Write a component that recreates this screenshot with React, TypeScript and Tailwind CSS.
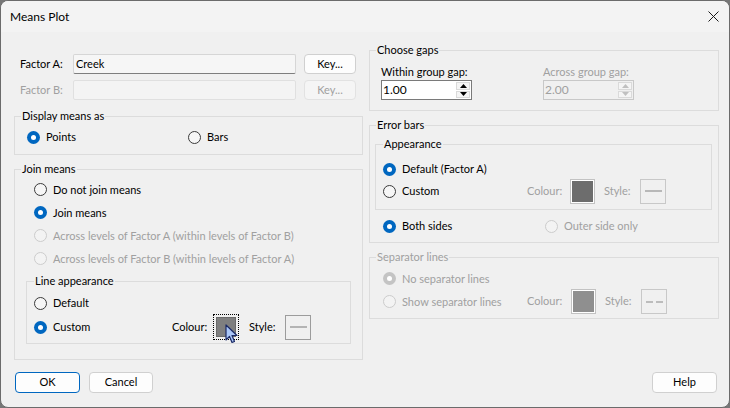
import React from 'react';

type RadioProps = {
  label: string;
  checked?: boolean;
  disabled?: boolean;
  className?: string;
};

const Radio = ({ label, checked, disabled, className = '' }: RadioProps) => {
  return (
    <div className={`flex items-center gap-[6px] ${className}`}>
      {checked ? (
        <span
          className={`flex h-[13px] w-[13px] shrink-0 items-center justify-center rounded-full ${
            disabled ? 'bg-[#c4c4c4]' : 'bg-[#0067c0]'
          }`}
        >
          <span className="h-[5px] w-[5px] rounded-full bg-white"></span>
        </span>
      ) : (
        <span
          className={`h-[13px] w-[13px] shrink-0 rounded-full border ${
            disabled ? 'border-[#cccccc] bg-[#f3f3f3]' : 'border-[#3a3a3a] bg-[#f6f6f6]'
          }`}
        ></span>
      )}
      <span className={`whitespace-nowrap leading-[16px] ${disabled ? 'text-[#a0a0a0]' : ''}`}>{label}</span>
    </div>
  );
};

type GroupProps = {
  title: string;
  disabled?: boolean;
  nested?: boolean;
  className?: string;
  children: React.ReactNode;
};

const Group = ({ title, disabled, nested, className = '', children }: GroupProps) => {
  return (
    <fieldset className={`border border-[#dcdcdc] ${className}`}>
      <legend
        className={`${nested ? 'ml-[7px]' : 'ml-[6px]'} px-[1px] leading-[14px] ${
          disabled ? 'text-[#a0a0a0]' : ''
        }`}
      >
        {title}
      </legend>
      {children}
    </fieldset>
  );
};

const Swatch = ({ fill, focused }: { fill: string; focused?: boolean }) => {
  if (focused) {
    return (
      <div className="h-[26px] w-[26px] border border-dotted border-black p-[2px]">
        <div className="h-full w-full border border-[#6a6a6a]" style={{ backgroundColor: fill }}></div>
      </div>
    );
  }
  return (
    <div className="h-[25px] w-[25px] border border-[#c2c2c2] bg-white p-[1px]">
      <div className="h-full w-full" style={{ backgroundColor: fill }}></div>
    </div>
  );
};

const StyleBox = ({ dashed, light }: { dashed?: boolean; light?: boolean }) => {
  return (
    <div
      className={`flex h-[25px] w-[26px] items-center justify-center border ${
        light ? 'border-[#c8c8c8]' : 'border-[#9c9c9c]'
      } bg-[#f0f0f0]`}
    >
      {dashed ? (
        <div className="flex gap-[3px]">
          <span className="h-[2px] w-[7px] bg-[#bcbcbc]"></span>
          <span className="h-[2px] w-[7px] bg-[#bcbcbc]"></span>
        </div>
      ) : (
        <span className={`h-[2px] w-[17px] ${light ? 'bg-[#b8b8b8]' : 'bg-[#b4b4b4]'}`}></span>
      )}
    </div>
  );
};

const SpinBox = ({ value, disabled }: { value: string; disabled?: boolean }) => {
  const arrow = disabled ? 'text-[#c0c0c0]' : 'text-black';
  return (
    <div
      className={`flex h-[20px] w-[91px] border ${
        disabled ? 'border-[#c8c8c8] bg-[#f0f0f0] text-[#a0a0a0]' : 'border-[#7a7a7a] bg-white'
      }`}
    >
      <span className="flex-1 pl-[1px] text-[12px] leading-[18px]">{value}</span>
      <div className="flex w-[16px] flex-col gap-[1px] p-[1px]">
        <div className={`flex flex-1 items-center justify-center border border-[#dadada] bg-[#f5f5f5] ${arrow}`}>
          <svg width="7" height="4" viewBox="0 0 7 4">
            <path d="M0 4 L3.5 0 L7 4 Z" fill="currentColor" />
          </svg>
        </div>
        <div className={`flex flex-1 items-center justify-center border border-[#dadada] bg-[#f5f5f5] ${arrow}`}>
          <svg width="7" height="4" viewBox="0 0 7 4">
            <path d="M0 0 L7 0 L3.5 4 Z" fill="currentColor" />
          </svg>
        </div>
      </div>
    </div>
  );
};

const Button = ({ label, primary, disabled, className = '' }: { label: string; primary?: boolean; disabled?: boolean; className?: string }) => {
  return (
    <div
      className={`flex h-[20px] items-center justify-center rounded-[4px] border ${
        primary ? 'border-[#0067c0]' : disabled ? 'border-[#e2e2e2]' : 'border-[#d0d0d0]'
      } ${disabled ? 'bg-[#f5f5f5] text-[#a0a0a0]' : 'bg-[#fdfdfd]'} ${className}`}
    >
      {label}
    </div>
  );
};

const Cursor = () => (
  <svg className="absolute left-[12px] top-[10px]" width="13" height="20" viewBox="0 0 13 20">
    <path
      d="M1 1 L1 16 L4.5 12.5 L7 18.5 L9.5 17.5 L7 11.5 L12 11.5 Z"
      fill="#aac6f7"
      stroke="#1b2a66"
      strokeWidth="1.2"
      strokeLinejoin="round"
    />
  </svg>
);

export default function App() {
  return (
    <div className="h-[408px] w-[730px] bg-[#767676]">
      <div className="flex h-full w-full flex-col overflow-hidden rounded-[8px] border border-[#6b6b6b] bg-[#f0f0f0] font-['Lato','Liberation_Sans',sans-serif] text-[11px] text-black">
        {/* title bar */}
        <div className="flex h-[31px] shrink-0 items-center justify-between bg-[#f3f3f3] pl-[9px] pr-[10px]">
          <span className="text-[12px]">Means Plot</span>
          <svg width="11" height="11" viewBox="0 0 11 11">
            <path d="M0.5 0.5 L10.5 10.5 M10.5 0.5 L0.5 10.5" stroke="#1a1a1a" strokeWidth="1" />
          </svg>
        </div>

        <div className="flex gap-[6px] pl-[13px]">
          {/* left column */}
          <div className="flex w-[349px] flex-col pt-[22px]">
            <div className="flex h-[20px] items-center">
              <span className="w-[59px] pl-[6px]">Factor A:</span>
              <div className="h-[20px] w-[223px] rounded-[2px] border border-[#d6d6d6] border-b-[#7e7e7e] bg-[#f6f6f6] pl-[2px] leading-[18px]">
                Creek
              </div>
              <Button label="Key..." className="ml-[8px] w-[52px]" />
            </div>
            <div className="mt-[6px] flex h-[20px] items-center">
              <span className="w-[59px] pl-[6px] text-[#a0a0a0]">Factor B:</span>
              <div className="h-[20px] w-[223px] rounded-[2px] border border-[#e0e0e0] bg-[#f4f4f4]"></div>
              <Button label="Key..." disabled className="ml-[8px] w-[52px]" />
            </div>

            <Group title="Display means as" className="mt-[9px] h-[46px]">
              <div className="flex items-center pl-[12px] pt-[6px]">
                <Radio label="Points" checked className="w-[161px]" />
                <Radio label="Bars" />
              </div>
            </Group>

            <Group title="Join means" className="mt-[7px] h-[198px]">
              <div className="flex flex-col pl-[19px] pt-[2px]">
                <div className="flex h-[23px] items-center">
                  <Radio label="Do not join means" />
                </div>
                <div className="flex h-[23px] items-center">
                  <Radio label="Join means" checked />
                </div>
                <div className="flex h-[23px] items-center">
                  <Radio label="Across levels of Factor A (within levels of Factor B)" disabled />
                </div>
                <div className="flex h-[23px] items-center">
                  <Radio label="Across levels of Factor B (within levels of Factor A)" disabled />
                </div>
              </div>
              <Group title="Line appearance" nested className="mx-[11px] mt-[4px] h-[70px]">
                <div className="flex flex-col pl-[7px] pt-[3px]">
                  <div className="flex h-[24px] items-center">
                    <Radio label="Default" />
                  </div>
                  <div className="flex h-[24px] items-center">
                    <Radio label="Custom" checked className="w-[138px]" />
                    <span className="w-[41px]">Colour:</span>
                    <div className="relative">
                      <Swatch fill="#7f7f7f" focused />
                      <Cursor />
                    </div>
                    <span className="ml-[10px] w-[36px]">Style:</span>
                    <StyleBox />
                  </div>
                </div>
              </Group>
            </Group>
          </div>

          {/* right column */}
          <div className="flex w-[350px] flex-col pt-[11px]">
            <Group title="Choose gaps" className="h-[68px]">
              <div className="flex pl-[11px] pt-[7px]">
                <div className="flex w-[162px] flex-col">
                  <span className="leading-[16px]">Within group gap:</span>
                  <SpinBox value="1.00" />
                </div>
                <div className="flex flex-col">
                  <span className="leading-[16px] text-[#a0a0a0]">Across group gap:</span>
                  <SpinBox value="2.00" disabled />
                </div>
              </div>
            </Group>

            <Group title="Error bars" className="mt-[7px] h-[125px]">
              <Group title="Appearance" nested className="ml-[5px] mr-[6px] mt-[5px] h-[73px]">
                <div className="flex flex-col pl-[7px] pt-[7px]">
                  <div className="flex h-[22px] items-center">
                    <Radio label="Default (Factor A)" checked />
                  </div>
                  <div className="flex h-[22px] items-center">
                    <Radio label="Custom" className="w-[144px]" />
                    <span className="w-[43px] text-[#a0a0a0]">Colour:</span>
                    <Swatch fill="#6d6d6d" />
                    <span className="ml-[9px] w-[36px] text-[#a0a0a0]">Style:</span>
                    <StyleBox light />
                  </div>
                </div>
              </Group>
              <div className="mt-[8px] flex h-[16px] items-center pl-[13px]">
                <Radio label="Both sides" checked className="w-[162px]" />
                <Radio label="Outer side only" disabled />
              </div>
            </Group>

            <Group title="Separator lines" disabled className="mt-[7px] h-[69px]">
              <div className="flex flex-col pl-[13px] pt-[3px]">
                <div className="flex h-[23px] items-center">
                  <Radio label="No separator lines" checked disabled />
                </div>
                <div className="flex h-[23px] items-center">
                  <Radio label="Show separator lines" disabled className="w-[144px]" />
                  <span className="w-[44px] text-[#a0a0a0]">Colour:</span>
                  <Swatch fill="#8f8f8f" />
                  <span className="ml-[9px] w-[36px] text-[#a0a0a0]">Style:</span>
                  <StyleBox dashed light />
                </div>
              </div>
            </Group>
          </div>
        </div>

        {/* footer */}
        <div className="mt-[12px] flex items-center pl-[14px] pr-[12px]">
          <Button label="OK" primary className="h-[21px] w-[65px]" />
          <Button label="Cancel" className="ml-[9px] h-[21px] w-[64px]" />
          <div className="flex-1"></div>
          <Button label="Help" className="h-[21px] w-[65px]" />
        </div>
      </div>
    </div>
  );
}
